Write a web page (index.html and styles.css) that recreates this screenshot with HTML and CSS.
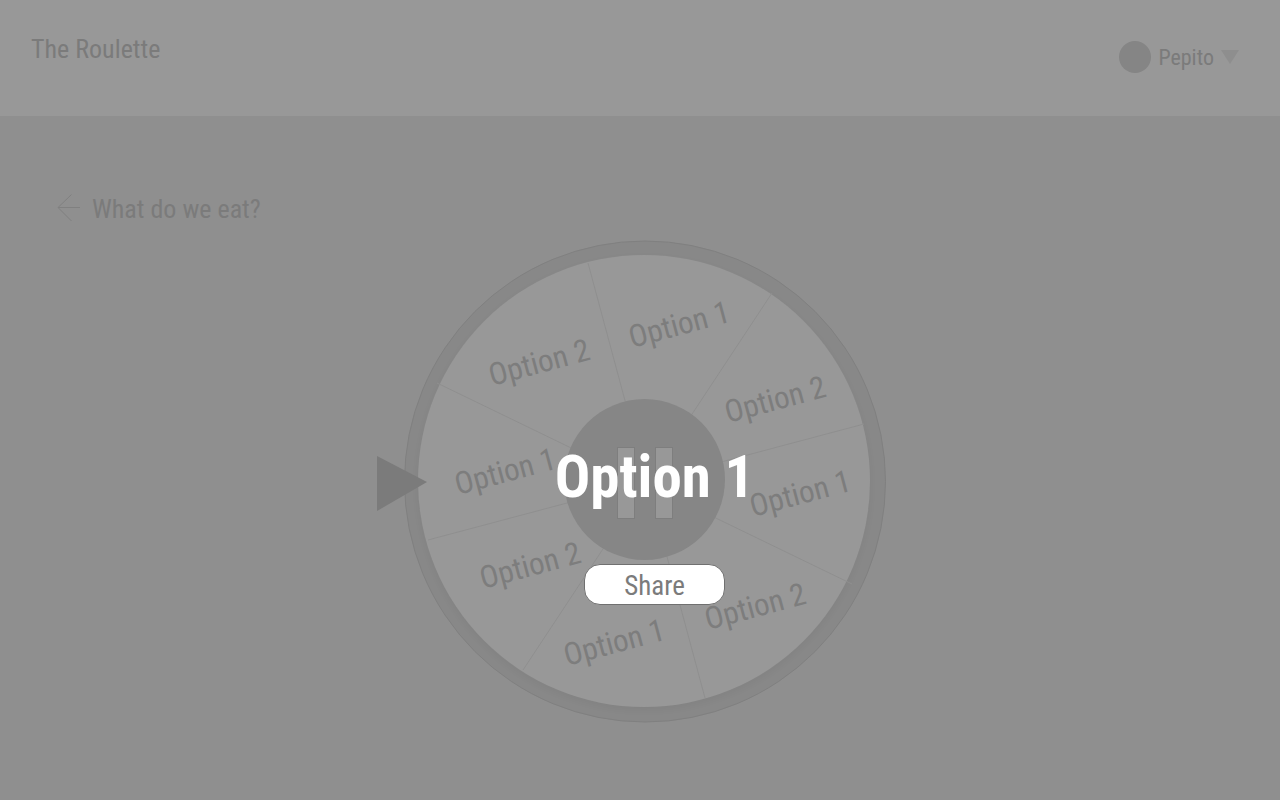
FILE: index.html
```html
<!DOCTYPE html>
<html lang="en">
<head>
<meta charset="utf-8">
<meta name="viewport" content="width=device-width, initial-scale=1">
<title>The Roulette</title>
<link rel="stylesheet" href="styles.css">
</head>
<body>
<header class="topbar">
  <div class="brand">The Roulette</div>
  <button class="user" type="button">
    <span class="avatar"></span>
    <span class="user-name">Pepito</span>
    <svg class="caret" width="18" height="14" viewBox="0 0 18 14" aria-hidden="true"><path d="M0 0H18L9 14Z"/></svg>
  </button>
</header>

<main class="page">
  <div class="title-row">
    <a class="back" href="#" aria-label="Back">
      <svg width="24" height="28" viewBox="0 0 24 28" aria-hidden="true"><path d="M14.500 .5L1 13.500L14.500 27"/><path d="M1 13.500H23"/></svg>
    </a>
    <h1 class="title">What do we eat?</h1>
  </div>

  <div class="stage">
    <div class="wheel">
      <svg class="wheel-art" viewBox="-269 -241 538 484" role="img" aria-label="Roulette wheel">
        <circle class="ring" cx="0" cy="0.500" r="240.500"/>
        <circle class="disc" cx="-1" cy="0" r="226"/>
        <g class="spokes">
          <path d="M-57 -218L60 217"/>
          <path d="M127 -188L-122 189"/>
          <path d="M219 -57L-217 59"/>
          <path d="M-208 -98L207 103"/>
        </g>
        <g class="labels">
          <text transform="translate(-13 -133) rotate(-15)">Option 1</text>
          <text transform="translate(83 -58) rotate(-15)">Option 2</text>
          <text transform="translate(108 36) rotate(-15)">Option 1</text>
          <text transform="translate(63 149) rotate(-15)">Option 2</text>
          <text transform="translate(-78 185) rotate(-15)">Option 1</text>
          <text transform="translate(-162 108) rotate(-15)">Option 2</text>
          <text transform="translate(-187 14) rotate(-15)">Option 1</text>
          <text transform="translate(-153 -95) rotate(-15)">Option 2</text>
        </g>
        <path class="pointer" d="M-268 -25L-218 1L-268 30Z"/>
      </svg>
      <button class="hub" type="button" aria-label="Pause">
        <svg width="56" height="72" viewBox="0 0 56 72" aria-hidden="true"><rect x=".5" y=".5" width="17" height="71"/><rect x="38.500" y=".5" width="17" height="71"/></svg>
      </button>
    </div>
  </div>
</main>

<div class="result" role="dialog" aria-labelledby="winner">
  <h2 class="winner" id="winner">Option 1</h2>
  <button class="share" type="button">Share</button>
</div>
</body>
</html>
```
FILE: styles.css
```css
* {
  box-sizing: border-box;
}

body {
  margin: 0;
  min-height: 100vh;
  background: #8f8f8f;
  color: #7b7b7b;
  font-family: "Roboto Condensed", "Liberation Sans", sans-serif;
  font-size: 27px;
  line-height: 32px;
}

button {
  border: 0;
  padding: 0;
  background: none;
  color: inherit;
  font: inherit;
  cursor: pointer;
}

.topbar {
  display: flex;
  justify-content: space-between;
  align-items: flex-start;
  padding: 33px 41px 43px 31px;
  background: #989898;
}

.brand {
  font-size: 26px;
}

.user {
  display: flex;
  align-items: center;
  gap: 7px;
  margin-top: 8px;
  font-size: 22px;
  line-height: 32px;
}

.user-name {
  height: 32px;
  padding-top: 1px;
}

.avatar {
  width: 32px;
  height: 32px;
  border-radius: 50%;
  background: #858585;
}

.caret {
  fill: #8e8e8e;
}

.page {
  padding-top: 76px;
}

.title-row {
  display: flex;
  align-items: center;
  gap: 11px;
  padding-left: 57px;
}

.back {
  display: flex;
}

.back path {
  fill: none;
  stroke: #808080;
}

.title {
  height: 32px;
  margin: 0;
  padding-top: 1px;
  font-size: 26px;
  font-weight: 400;
}

.stage {
  display: flex;
  justify-content: center;
  margin-top: 16px;
  padding-left: 10px;
}

.wheel {
  position: relative;
  width: 538px;
}

.wheel-art {
  display: block;
  width: 100%;
}

.ring {
  fill: #888888;
  stroke: #808080;
}

.disc {
  fill: #989898;
  filter: drop-shadow(0 3px 3px rgba(0, 0, 0, 0.04));
}

.spokes {
  stroke: #8f8f8f;
}

.labels {
  fill: #7d7d7d;
  font-size: 31px;
}

.pointer {
  fill: #7b7b7b;
}

.hub {
  position: absolute;
  top: 50%;
  left: 50%;
  display: flex;
  align-items: center;
  justify-content: center;
  width: 161px;
  height: 161px;
  margin: -83px 0 0 -81px;
  padding-top: 6px;
  border-radius: 50%;
  background: #868686;
}

.hub rect {
  fill: #989898;
  stroke: #7e7e7e;
}

.result {
  position: absolute;
  top: 0;
  left: 0;
  display: flex;
  flex-direction: column;
  align-items: center;
  width: 100%;
  padding: 445px 0 0 29px;
}

.winner {
  margin: 0;
  color: #ffffff;
  font-size: 59px;
  font-weight: 700;
  line-height: 64px;
}

.share {
  width: 141px;
  height: 41px;
  margin-top: 55px;
  padding-top: 2px;
  border: 1px solid #707070;
  border-radius: 16px;
  background: #ffffff;
  color: #7b7b7b;
}
```
